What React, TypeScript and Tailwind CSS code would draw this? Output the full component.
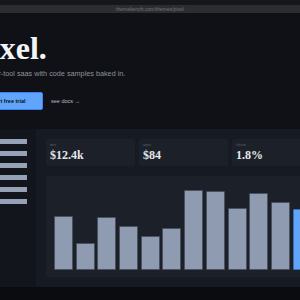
import React from 'react';

const kpis = [
  { label: 'mrr', value: '$12.4k' },
  { label: 'arpu', value: '$84' },
  { label: 'churn', value: '1.8%' },
];

// bar heights in px, last one highlighted
const bars = [54, 27, 53, 44, 34, 42, 80, 79, 62, 77, 68, 61, 70];

const App: React.FC = () => {
  return (
    <div className="w-[300px] h-[300px] overflow-hidden flex flex-col bg-[#0f1117] font-['Liberation_Sans',sans-serif]">
      {/* browser chrome */}
      <div className="h-[5px] shrink-0 bg-[#16171b]" />
      <div className="h-[8px] shrink-0 bg-[#2c2d30] flex items-center justify-center">
        <span className="text-[5px] leading-none text-[#74767c]">themebench.com/themes/pixel</span>
      </div>

      {/* hero */}
      <div className="-ml-[27px] pt-[19px] flex flex-col shrink-0">
        <h1 className="font-['Liberation_Serif',serif] font-bold text-[32px] leading-[32px] text-[#f3f4f6] whitespace-nowrap">
          pixel.
        </h1>
        <p className="mt-[5px] text-[7.25px] leading-[10px] text-[#8b919c] whitespace-nowrap">
          a builder-tool saas with code samples baked in.
        </p>
        <div className="mt-[13px] flex items-center gap-[8px]">
          <button className="w-[70px] h-[18px] rounded-[2px] bg-[#60a5fa] border border-[#3b82f6] text-[5.5px] font-semibold text-[#0b1220] whitespace-nowrap">
            start free trial
          </button>
          <span className="text-[5.5px] text-[#b8bcc4] whitespace-nowrap">see docs →</span>
        </div>
      </div>

      {/* dashboard preview */}
      <div className="mt-[19px] h-[158px] shrink-0 flex">
        <div className="w-[36px] shrink-0 bg-[#12151c] pt-[10px] flex flex-col gap-[7px]">
          {[0, 1, 2, 3, 4, 5].map(i => (
            <div key={i} className="w-[27px] h-[5px] bg-[#95a1b5]" />
          ))}
        </div>
        <div className="flex-1 bg-[#161a22] pl-[10px] pt-[10px] pb-[10px] flex flex-col gap-[10px] overflow-hidden">
          <div className="flex gap-[4px] shrink-0">
            {kpis.map(k => (
              <div key={k.label} className="w-[89px] h-[27px] shrink-0 rounded-[2px] bg-[#1c2029] pl-[4px] pt-[3px]">
                <div className="text-[4px] leading-[5px] text-[#5d6372]">{k.label}</div>
                <div className="mt-[2px] font-['Liberation_Serif',serif] font-bold text-[12px] leading-[12px] text-[#e5e7eb]">
                  {k.value}
                </div>
              </div>
            ))}
          </div>
          <div className="w-[300px] flex-1 shrink-0 rounded-[2px] bg-[#1c2029] pl-[8px] pb-[7px] flex items-end gap-[2.7px]">
            {bars.map((h, i) => (
              <div
                key={i}
                className={`w-[19px] shrink-0 rounded-[1px] border ${
                  i >= 11 ? 'bg-[#60a5fa] border-[#3b6fb0]' : 'bg-[#8f9bb0] border-[#4a5262]'
                }`}
                style={{ height: `${h}px` }}
              />
            ))}
          </div>
        </div>
      </div>

      <div className="flex-1 bg-[#0b0c10]" />
    </div>
  );
};

export default App;
